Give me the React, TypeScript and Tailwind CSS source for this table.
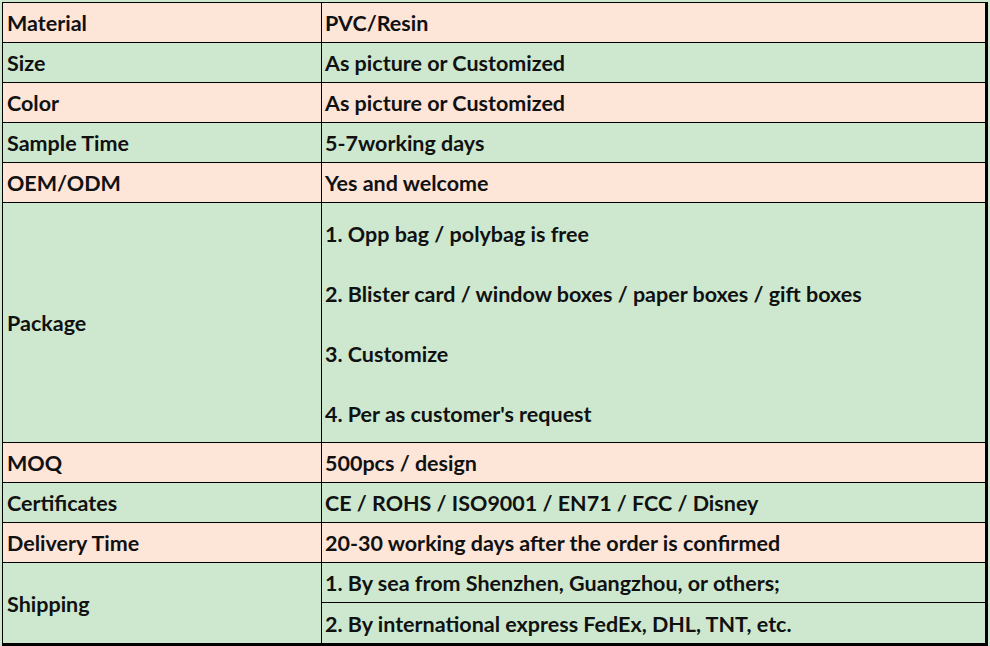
import React from "react";

const rows: { label: string; value: string; bg: "p" | "g" }[] = [
  { label: "Material", value: "PVC/Resin", bg: "p" },
  { label: "Size", value: "As picture or Customized", bg: "g" },
  { label: "Color", value: "As picture or Customized", bg: "p" },
  { label: "Sample Time", value: "5-7working days", bg: "g" },
  { label: "OEM/ODM", value: "Yes and welcome", bg: "p" },
];

const rows2: { label: string; value: string; bg: "p" | "g" }[] = [
  { label: "MOQ", value: "500pcs / design", bg: "p" },
  { label: "Certificates", value: "CE / ROHS / ISO9001 / EN71 / FCC / Disney", bg: "g" },
  { label: "Delivery Time", value: "20-30 working days after the order is confirmed", bg: "p" },
];

function Row({ label, value, bg }: { label: string; value: string; bg: "p" | "g" }) {
  return (
    <div
      className={`flex h-[40px] border-b border-black ${bg === "p" ? "bg-[#fde5d8]" : "bg-[#cde8cf]"}`}
    >
      <div className="w-[319px] shrink-0 border-r border-black pl-[4px] pt-[2px] flex items-center">{label}</div>
      <div className="flex-1 pl-[3px] pt-[2px] flex items-center">{value}</div>
    </div>
  );
}

export default function App() {
  return (
    <div
      className="w-[990px] h-[646px] bg-[#cde8cf] pt-[2px] pl-[2px] overflow-hidden text-[21.5px] font-bold text-[#111]"
      style={{ fontFamily: "Lato, 'Open Sans', sans-serif" }}
    >
      <div className="w-[986px] border-l border-t border-black border-r-[3px] border-b-[3px]">
        {rows.map((r) => (
          <Row key={r.label} {...r} />
        ))}
        <div className="flex h-[240px] border-b border-black bg-[#cde8cf]">
          <div className="w-[319px] shrink-0 border-r border-black pl-[4px] pt-[2px] flex items-center">Package</div>
          <div className="flex-1 pl-[3px] pt-[2px] flex flex-col justify-center gap-[30px] leading-[30px]">
            <div>1. Opp bag / polybag is free</div>
            <div>2. Blister card / window boxes / paper boxes / gift boxes</div>
            <div>3. Customize</div>
            <div>4. Per as customer's request</div>
          </div>
        </div>
        {rows2.map((r) => (
          <Row key={r.label} {...r} />
        ))}
        <div className="flex h-[80px] bg-[#cde8cf]">
          <div className="w-[319px] shrink-0 border-r border-black pl-[4px] pt-[2px] flex items-center">Shipping</div>
          <div className="flex-1 flex flex-col">
            <div className="h-[40px] border-b border-black pl-[3px] pt-[2px] flex items-center">
              1. By sea from Shenzhen, Guangzhou, or others;
            </div>
            <div className="h-[40px] pl-[3px] pt-[2px] flex items-center">2. By international express FedEx, DHL, TNT, etc.</div>
          </div>
        </div>
      </div>
    </div>
  );
}
